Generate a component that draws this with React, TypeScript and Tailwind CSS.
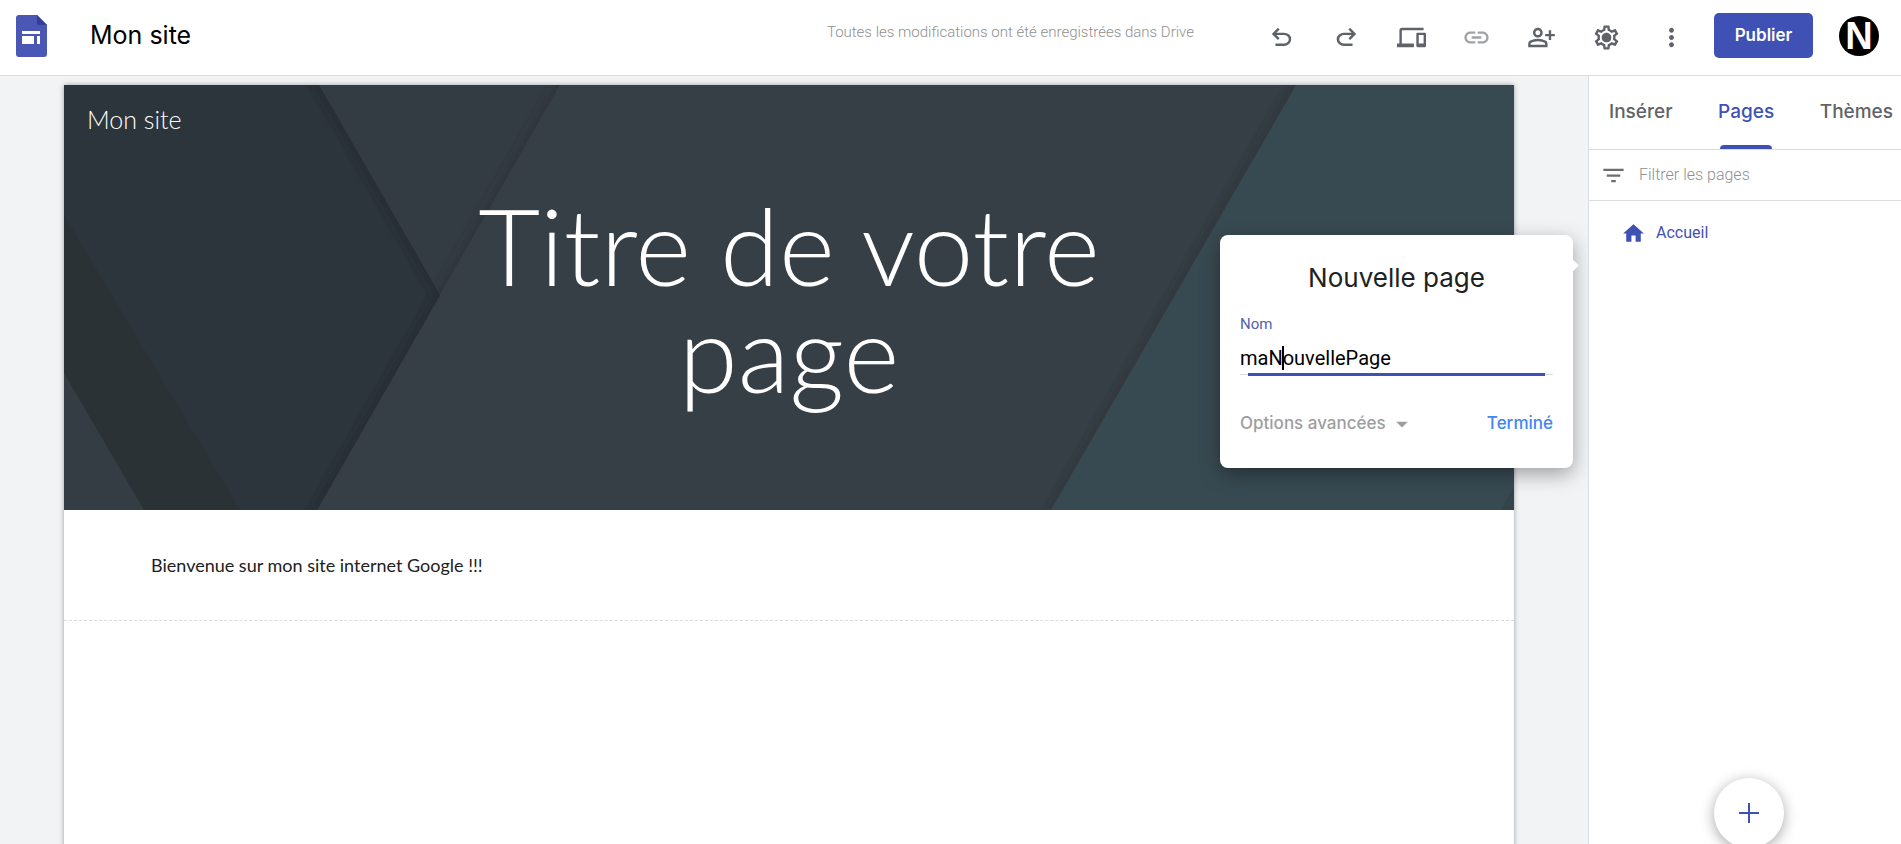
import type { ReactNode } from "react";
import {
  MdArrowDropDown,
  MdDevices,
  MdFilterList,
  MdHome,
  MdLink,
  MdMoreVert,
  MdOutlinePersonAddAlt,
  MdOutlineSettings,
} from "react-icons/md";

function SitesLogo() {
  return (
    <svg viewBox="0 0 31 42" className="h-[42px] w-[31px]" aria-hidden="true">
      <path d="M3 0h18l10 10v29a3 3 0 0 1-3 3H3a3 3 0 0 1-3-3V3a3 3 0 0 1 3-3z" fill="#4a57b5" />
      <path d="M21 0l10 10H23a2 2 0 0 1-2-2z" fill="#33409a" />
      <path d="M6 16h18v3H6zM6 21h12v8H6zM21 21h3v8h-3z" fill="#fff" />
    </svg>
  );
}

function Symbol({ d }: { d: string }) {
  return (
    <svg viewBox="0 -960 960 960" className="size-[29px]" fill="currentColor" aria-hidden="true">
      <path d={d} />
    </svg>
  );
}

const UNDO =
  "M280-200v-80h284q63 0 109.5-40T720-420q0-60-46.5-100T564-560H312l104 104-56 56-200-200 200-200 56 56-104 104h252q97 0 169.5 63T800-420q0 94-72.5 157T564-200H280Z";
const REDO =
  "M396-200q-97 0-169.5-63T154-420q0-94 72.5-157T396-640h252L544-744l56-56 200 200-200 200-56-56 104-104H396q-63 0-109.5 40T240-420q0 60 46.5 100T396-280h284v80H396Z";

function ToolButton({ label, children, dim }: { label: string; children: ReactNode; dim?: boolean }) {
  return (
    <button type="button" aria-label={label} className={dim ? "text-[#a0a2a5]" : "text-[#5f6368]"}>
      {children}
    </button>
  );
}

function Header() {
  return (
    <header className="flex h-[76px] shrink-0 items-center border-b border-[#dadce0] bg-white pr-[22px] pb-1 pl-4">
      <SitesLogo />
      <h1 className="ml-[43px] pb-[2px] font-[Inter,sans-serif] text-[25px] leading-8 text-black">Mon site</h1>
      <p className="mr-[73px] ml-auto pb-[6px] font-[Roboto,sans-serif] text-[15px] font-light text-[#8f8f8f]">
        Toutes les modifications ont été enregistrées dans Drive
      </p>
      <div className="flex items-center gap-9 pt-1">
        <ToolButton label="Annuler">
          <Symbol d={UNDO} />
        </ToolButton>
        <ToolButton label="Rétablir">
          <Symbol d={REDO} />
        </ToolButton>
        <ToolButton label="Aperçu">
          <MdDevices className="size-[29px]" />
        </ToolButton>
        <ToolButton label="Copier le lien" dim>
          <MdLink className="size-[29px]" />
        </ToolButton>
        <ToolButton label="Partager">
          <MdOutlinePersonAddAlt className="size-[29px]" />
        </ToolButton>
        <ToolButton label="Paramètres">
          <span className="grid place-items-center">
            <MdOutlineSettings className="col-start-1 row-start-1 size-[29px]" />
            <span className="col-start-1 row-start-1 size-2 rounded-full bg-[#5f6368]" />
          </span>
        </ToolButton>
        <ToolButton label="Plus">
          <MdMoreVert className="size-[29px]" />
        </ToolButton>
      </div>
      <button
        type="button"
        className="ml-7 h-[45px] w-[99px] rounded-[5px] bg-[#3f51b5] font-[Inter,sans-serif] text-[17px] font-semibold text-white"
      >
        Publier
      </button>
      <button
        type="button"
        aria-label="Compte"
        className="ml-[26px] size-10 shrink-0 rounded-full bg-black text-center font-['Liberation_Sans',sans-serif] text-[38px] leading-10 font-bold text-white"
      >
        N
      </button>
    </header>
  );
}

function HeroBackground() {
  return (
    <svg
      viewBox="0 0 1450 425"
      preserveAspectRatio="none"
      className="absolute inset-0 size-full"
      aria-hidden="true"
    >
      <defs>
        <filter id="soft" x="-20%" y="-20%" width="140%" height="140%">
          <feGaussianBlur stdDeviation="5" />
        </filter>
        <clipPath id="leftOfTeal">
          <polygon points="0,0 1232,0 987,425 0,425" />
        </clipPath>
        <clipPath id="leftOfCentre">
          <polygon points="0,0 496,0 253,425 0,425" />
        </clipPath>
        <clipPath id="darkSheet">
          <polygon points="0,0 255,0 376,210 253,425 0,425" />
        </clipPath>
      </defs>
      <rect width="1450" height="425" fill="#384a51" />
      <polygon points="1450,402 1450,425 1437,425" fill="#33444a" />
      <polygon points="0,0 1232,0 987,425 0,425" fill="#363f45" />
      <g clipPath="url(#leftOfTeal)">
        <path d="M1236-8L985 432" stroke="#252d31" strokeOpacity=".6" strokeWidth="7" filter="url(#soft)" />
      </g>
      <polygon points="0,0 496,0 253,425 0,425" fill="#343c43" />
      <g clipPath="url(#leftOfCentre)">
        <path d="M500-8L249 432" stroke="#252d31" strokeOpacity=".6" strokeWidth="8" filter="url(#soft)" />
      </g>
      <polygon points="0,0 255,0 376,210 253,425 0,425" fill="#2c353b" />
      <g clipPath="url(#darkSheet)">
        <path d="M251-8L376 210L249 432" fill="none" stroke="#1f272b" strokeOpacity=".8" strokeWidth="7" filter="url(#soft)" />
      </g>
      <polygon points="0,130 176,425 0,425" fill="#2a3235" />
      <polygon points="0,288 80,425 0,425" fill="#343d43" />
    </svg>
  );
}

function SitePage() {
  return (
    <article className="mt-[9px] mr-[74px] ml-16 h-full bg-white font-[Lato,sans-serif] shadow-[0_0_5px_rgba(0,0,0,0.35)]">
      <section className="relative h-[425px] overflow-hidden text-white">
        <HeroBackground />
        <div className="relative">
          <p className="px-[23px] pt-[18px] text-[25px] leading-8 font-light">Mon site</p>
          <h2 className="mx-auto mt-14 max-w-[720px] text-center text-[107px] leading-[107px] font-light">
            Titre de votre page
          </h2>
        </div>
      </section>
      <section className="border-b border-dashed border-[#dcdcdc] px-[87px] py-[43px]">
        <p className="text-[18px] leading-6 text-[#212121]">Bienvenue sur mon site internet Google !!!</p>
      </section>
    </article>
  );
}

function NewPageDialog() {
  return (
    <form
      aria-label="Nouvelle page"
      className="absolute top-[159px] right-[15px] w-[353px] rounded-lg bg-white px-5 pt-[25px] pb-[27px] shadow-[0_6px_20px_rgba(0,0,0,0.35)]"
    >
      <span className="absolute top-[26px] -right-1 size-[9px] rotate-45 bg-white" />
      <h2 className="text-center font-[Inter,sans-serif] text-[26px] leading-9 text-[#202124]">Nouvelle page</h2>
      <label htmlFor="page-name" className="mt-[18px] block font-[Roboto,sans-serif] text-[15px] leading-5 text-[#5560ad]">
        Nom
      </label>
      <div className="relative mt-[7px]">
        <input
          id="page-name"
          type="text"
          defaultValue="maNouvellePage"
          className="block h-[34px] w-full border-b border-[#dadce0] bg-transparent font-[Roboto,sans-serif] text-[20px] text-black outline-none"
        />
        <span className="absolute top-[5px] left-[42px] h-6 w-[2px] bg-black" />
        <span className="absolute inset-x-2 -bottom-px h-[3px] bg-[#3f51b5]" />
      </div>
      <div className="mt-8 flex h-[34px] items-center justify-between font-[Inter,sans-serif] text-[17px] font-medium">
        <button type="button" className="flex items-center gap-[2px] text-[#9e9e9e]">
          Options avancées
          <MdArrowDropDown className="size-7" />
        </button>
        <button type="submit" className="text-[#4285f4]">
          Terminé
        </button>
      </div>
    </form>
  );
}

function SidePanel() {
  return (
    <aside className="relative flex w-[313px] shrink-0 flex-col border-l border-[#dadce0] bg-white">
      <nav className="flex h-[74px] items-stretch justify-between border-b border-[#dadce0] pr-2 pl-5 font-[Inter,sans-serif] text-[19px] font-medium text-[#5f6368]">
        <button type="button">Insérer</button>
        <button type="button" className="relative text-[#3f51b5]">
          Pages
          <span className="absolute inset-x-[2px] bottom-0 h-1 rounded-t bg-[#3f51b5]" />
        </button>
        <button type="button">Thèmes</button>
      </nav>
      <label className="flex h-[51px] items-center gap-3 border-b border-[#dadce0] pl-[11px] text-[#6d6d6d]">
        <MdFilterList className="size-[27px]" />
        <input
          type="text"
          aria-label="Filtrer les pages"
          placeholder="Filtrer les pages"
          className="min-w-0 flex-1 bg-transparent font-[Roboto,sans-serif] text-[16px] font-light outline-none placeholder:text-[#8f8f8f]"
        />
      </label>
      <a
        href="#accueil"
        className="mt-4 flex h-8 items-center gap-[10px] pl-8 font-[Roboto,sans-serif] text-[16px] text-[#3f51b5]"
      >
        <MdHome className="size-[25px]" />
        Accueil
      </a>
      <button
        type="button"
        aria-label="Ajouter une page"
        className="absolute -bottom-1 left-[125px] grid size-[70px] place-items-center rounded-full bg-white shadow-[0_3px_14px_rgba(0,0,0,0.35)]"
      >
        <svg viewBox="0 0 20 20" className="size-5" stroke="#3f51b5" strokeWidth="2" aria-hidden="true">
          <path d="M10 0v20M0 10h20" />
        </svg>
      </button>
    </aside>
  );
}

export default function App() {
  return (
    <div className="flex h-screen flex-col overflow-hidden bg-[#f1f3f4]">
      <Header />
      <div className="flex min-h-0 flex-1">
        <main className="relative min-w-0 flex-1">
          <div className="h-full overflow-hidden">
            <SitePage />
          </div>
          <NewPageDialog />
        </main>
        <SidePanel />
      </div>
    </div>
  );
}
